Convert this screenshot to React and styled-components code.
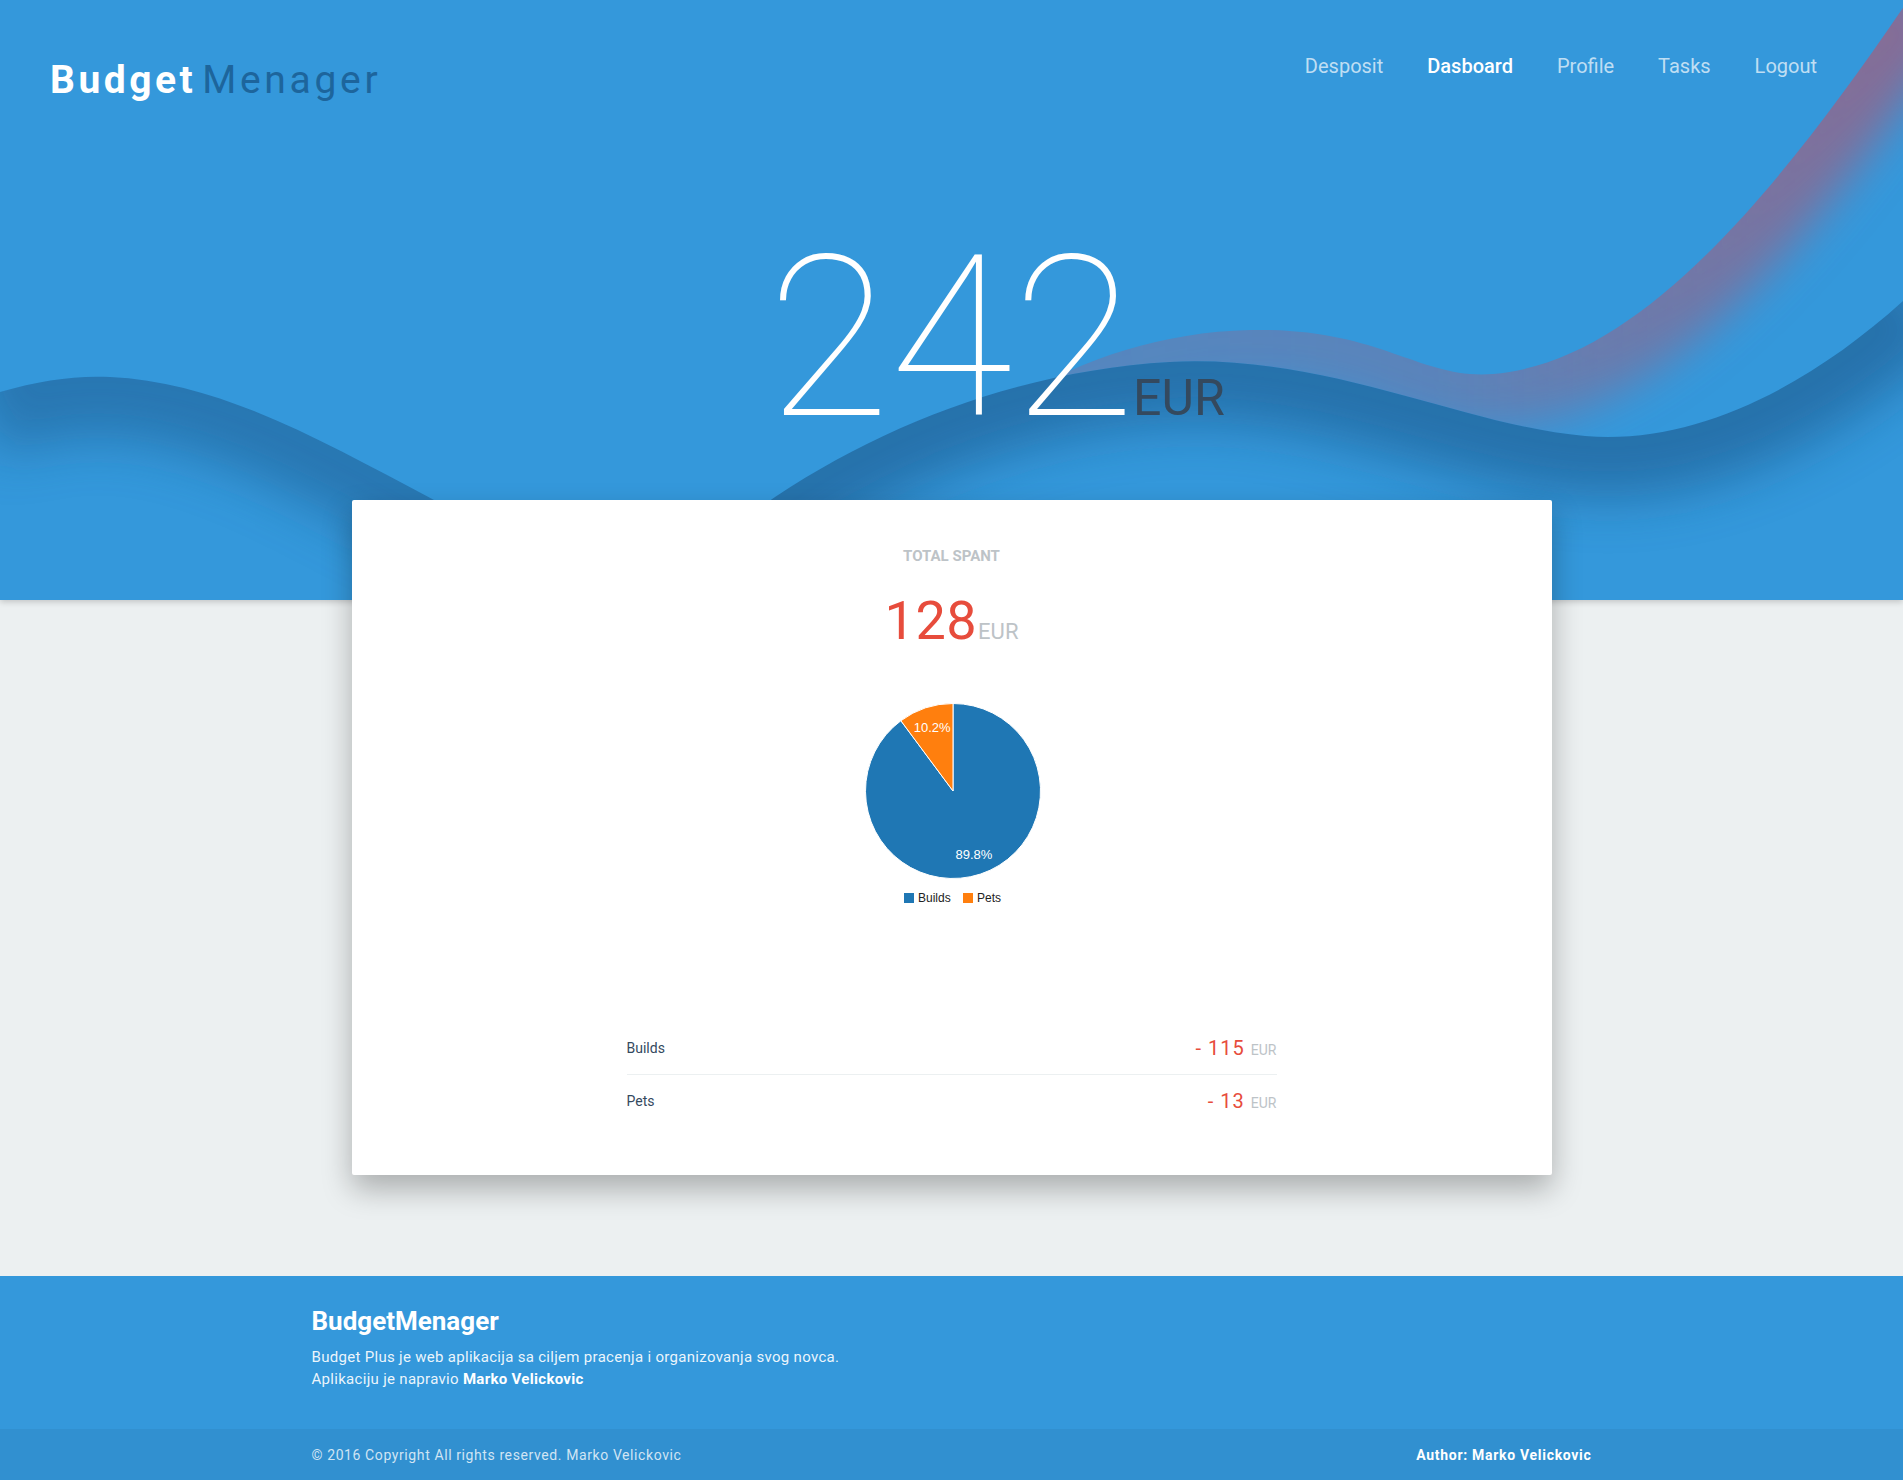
import React from "react";
import styled, { createGlobalStyle } from "styled-components";

const GlobalStyle = createGlobalStyle`
  * {
    box-sizing: border-box;
  }
  body {
    margin: 0;
    background: #ecf0f1;
    color: #34495e;
    font-family: Roboto, "Liberation Sans", sans-serif;
  }
`;

const navLinks = ["Desposit", "Dasboard", "Profile", "Tasks", "Logout"];

const expenses = [
    { name: "Builds", amount: 115, color: "#1f77b4" },
    { name: "Pets", amount: 13, color: "#ff7f0e" },
];

// slojevi talasa u headeru (pozadi -> napred)
const waves = [
    {
        id: "a",
        edge: "M820,640 C870,480 1040,335 1250,330 C1380,327 1420,380 1493,374 C1640,362 1780,190 1915,-10",
        close: "L2100,-10 L2100,800 L820,800 Z",
        shade: "url(#purple-fade)",
        width: 110,
        blur: 22,
        opacity: 1,
    },
    {
        id: "b",
        edge: "M600,660 C720,500 940,375 1170,362 C1330,354 1460,425 1585,436 C1700,446 1820,380 1915,290",
        close: "L2100,290 L2100,800 L600,800 Z",
        shade: "#1a5689",
        width: 120,
        blur: 26,
        opacity: 0.58,
    },
    {
        id: "c",
        edge: "M-20,398 C30,382 70,375 110,377 C220,382 320,440 434,500 C480,525 520,560 560,640",
        close: "L560,800 L-100,800 L-100,398 Z",
        shade: "#1a5689",
        width: 120,
        blur: 26,
        opacity: 0.5,
    },
];

function HeaderWaves() {
    return (
        <Waves viewBox="0 0 1903 600" preserveAspectRatio="none">
            <defs>
                <linearGradient id="purple-fade" gradientUnits="userSpaceOnUse" x1="900" y1="0" x2="1903" y2="0">
                    <stop offset="0" stopColor="#8a6a92" stopOpacity="0.35" />
                    <stop offset="0.55" stopColor="#8a6a92" stopOpacity="0.45" />
                    <stop offset="1" stopColor="#8a6a92" stopOpacity="0.95" />
                </linearGradient>
                {waves.map((w) => (
                    <React.Fragment key={w.id}>
                        <clipPath id={`clip-${w.id}`}>
                            <path d={w.edge + " " + w.close} />
                        </clipPath>
                        <filter
                            id={`blur-${w.id}`}
                            filterUnits="userSpaceOnUse"
                            x="-300"
                            y="-300"
                            width="2600"
                            height="1300"
                        >
                            <feGaussianBlur stdDeviation={w.blur} />
                        </filter>
                    </React.Fragment>
                ))}
            </defs>
            {waves.map((w) => (
                <g key={w.id}>
                    <path d={w.edge + " " + w.close} fill="#3498db" />
                    <g clipPath={`url(#clip-${w.id})`}>
                        <path
                            d={w.edge}
                            fill="none"
                            stroke={w.shade}
                            strokeWidth={w.width}
                            opacity={w.opacity}
                            filter={`url(#blur-${w.id})`}
                        />
                    </g>
                </g>
            ))}
        </Waves>
    );
}

function PieChart({ data }) {
    const total = data.reduce((s, d) => s + d.amount, 0);
    const cx = 121;
    const cy = 92;
    const r = 87.5;
    const point = (a, rad) => [cx + rad * Math.sin(a), cy - rad * Math.cos(a)];

    let start = 0;
    const slices = data.map((d) => {
        const angle = (d.amount / total) * Math.PI * 2;
        const a0 = start;
        const a1 = start + angle;
        start = a1;
        const [x0, y0] = point(a0, r);
        const [x1, y1] = point(a1, r);
        const [lx, ly] = point((a0 + a1) / 2, r * 0.76);
        return {
            ...d,
            path: `M${cx},${cy} L${x0},${y0} A${r},${r} 0 ${angle > Math.PI ? 1 : 0} 1 ${x1},${y1} Z`,
            lx,
            ly,
            pct: ((d.amount / total) * 100).toFixed(1) + "%",
        };
    });

    const legendX = [72, 131];

    return (
        <ChartSvg width="240" height="210" viewBox="0 0 240 210">
            {slices.map((s) => (
                <path key={s.name} d={s.path} fill={s.color} stroke="#fff" strokeWidth="1" />
            ))}
            {slices.map((s) => (
                <text
                    key={s.name + "-l"}
                    x={s.lx}
                    y={s.ly + 1}
                    fill="#fff"
                    fontSize="13"
                    textAnchor="middle"
                    dominantBaseline="middle"
                >
                    {s.pct}
                </text>
            ))}
            {slices.map((s, i) => (
                <g key={s.name + "-legend"}>
                    <rect x={legendX[i]} y="194" width="10" height="10" fill={s.color} />
                    <text x={legendX[i] + 14} y="199.5" fontSize="12" fill="#222" dominantBaseline="middle">
                        {s.name}
                    </text>
                </g>
            ))}
        </ChartSvg>
    );
}

export default function App() {
    const total = expenses.reduce((s, d) => s + d.amount, 0);

    return (
        <>
            <GlobalStyle />
            <Header>
                <HeaderWaves />
                <TopBar>
                    <Logo>
                        <b>Budget</b>
                        <span>Menager</span>
                    </Logo>
                    <Nav>
                        {navLinks.map((l) => (
                            <NavLink key={l} href="#" $active={l === "Dasboard"}>
                                {l}
                            </NavLink>
                        ))}
                    </Nav>
                </TopBar>
                <Balance>
                    242
                    <BalanceUnit>EUR</BalanceUnit>
                </Balance>
            </Header>

            <Main>
                <Card>
                    <CardLabel>TOTAL SPANT</CardLabel>
                    <Total>
                        {total}
                        <TotalUnit>EUR</TotalUnit>
                    </Total>
                    <PieChart data={expenses} />
                    <ExpenseList>
                        {expenses.map((e) => (
                            <ExpenseRow key={e.name}>
                                <ExpenseName>{e.name}</ExpenseName>
                                <ExpenseAmount>
                                    - {e.amount}
                                    <ExpenseUnit>EUR</ExpenseUnit>
                                </ExpenseAmount>
                            </ExpenseRow>
                        ))}
                    </ExpenseList>
                </Card>
            </Main>

            <Footer>
                <FooterInner>
                    <FooterTitle>BudgetMenager</FooterTitle>
                    <FooterText>
                        Budget Plus je web aplikacija sa ciljem pracenja i organizovanja svog novca.
                    </FooterText>
                    <FooterText>
                        Aplikaciju je napravio <b>Marko Velickovic</b>
                    </FooterText>
                </FooterInner>
                <FooterBar>
                    <FooterBarInner>
                        <Copyright>© 2016 Copyright All rights reserved. Marko Velickovic</Copyright>
                        <Author>Author: Marko Velickovic</Author>
                    </FooterBarInner>
                </FooterBar>
            </Footer>
        </>
    );
}

const Header = styled.header`
    position: relative;
    height: 600px;
    background: #3498db;
    overflow: hidden;
    box-shadow: 0 2px 6px rgba(0, 0, 0, 0.18);
`;
const Waves = styled.svg`
    position: absolute;
    left: 0;
    top: 0;
    width: 100%;
    height: 100%;
`;
const TopBar = styled.div`
    position: relative;
    display: flex;
    justify-content: space-between;
    align-items: flex-start;
    padding: 54px 86px 0 50px;
`;
const Logo = styled.div`
    margin-top: 3px;
    font-size: 39px;
    line-height: 46px;
    white-space: nowrap;
    b {
        font-weight: 700;
        color: #fff;
        letter-spacing: 3.5px;
    }
    span {
        margin-left: 6px;
        letter-spacing: 3.7px;
        color: #1d659c;
    }
`;
const Nav = styled.nav`
    display: flex;
    gap: 44px;
`;
const NavLink = styled.a`
    font-size: 20px;
    line-height: 24px;
    text-decoration: none;
    font-weight: ${(p) => (p.$active ? 500 : 400)};
    color: ${(p) => (p.$active ? "#fff" : "rgba(255, 255, 255, 0.7)")};
`;
const Balance = styled.div`
    position: relative;
    margin-top: 124px;
    text-align: center;
    font-size: 224px;
    font-weight: 100;
    line-height: 1;
    color: #fff;
`;
const BalanceUnit = styled.span`
    font-size: 50px;
    font-weight: 400;
    color: #34495e;
    margin-left: -2px;
    margin-right: -89px;
`;

const Main = styled.main`
    background: #ecf0f1;
    padding-bottom: 101px;
`;
const Card = styled.section`
    position: relative;
    width: 1200px;
    margin: -100px auto 0;
    padding: 47px 0 48px;
    display: flex;
    flex-direction: column;
    align-items: center;
    background: #fff;
    border-radius: 2px;
    box-shadow: 0 14px 30px rgba(0, 0, 0, 0.28);
`;
const CardLabel = styled.div`
    font-size: 15px;
    line-height: 18px;
    font-weight: 700;
    color: #bdc3c7;
`;
const Total = styled.div`
    margin-top: 29px;
    font-size: 54px;
    line-height: 1;
    letter-spacing: 0.5px;
    color: #e74c3c;
`;
const TotalUnit = styled.span`
    margin-left: 1px;
    font-size: 22px;
    letter-spacing: 0;
    color: #bdc3c7;
`;
const ChartSvg = styled.svg`
    display: block;
    margin-top: 51px;
    overflow: visible;
    font-family: "Liberation Sans", Arial, sans-serif;
`;
const ExpenseList = styled.ul`
    list-style: none;
    margin: 112px 0 0;
    padding: 0;
    width: 650px;
`;
const ExpenseRow = styled.li`
    display: flex;
    justify-content: space-between;
    align-items: center;
    height: 53px;
    & + & {
        border-top: 1px solid #ecf0f1;
    }
`;
const ExpenseName = styled.span`
    font-size: 14px;
    color: #34495e;
`;
const ExpenseAmount = styled.span`
    font-size: 20px;
    letter-spacing: 1px;
    color: #e74c3c;
`;
const ExpenseUnit = styled.span`
    margin-left: 6px;
    font-size: 14px;
    letter-spacing: 0;
    color: #bdc3c7;
`;

const Footer = styled.footer`
    background: #3498db;
    color: #fff;
`;
const FooterInner = styled.div`
    width: 1280px;
    margin: 0 auto;
    padding: 30px 0 39px;
`;
const FooterTitle = styled.h3`
    margin: 0 0 10px;
    font-size: 26px;
    line-height: 30px;
    font-weight: 700;
`;
const FooterText = styled.p`
    margin: 0;
    font-size: 15px;
    line-height: 22px;
    letter-spacing: 0.3px;
    color: rgba(255, 255, 255, 0.92);
    b {
        font-weight: 700;
        color: #fff;
    }
`;
const FooterBar = styled.div`
    height: 51px;
    background: #3190d0;
`;
const FooterBarInner = styled.div`
    width: 1280px;
    height: 100%;
    margin: 0 auto;
    display: flex;
    justify-content: space-between;
    align-items: center;
`;
const Copyright = styled.span`
    font-size: 14px;
    letter-spacing: 0.6px;
    color: rgba(255, 255, 255, 0.78);
`;
const Author = styled.span`
    font-size: 14px;
    font-weight: 700;
    letter-spacing: 0.7px;
    color: #fff;
`;
